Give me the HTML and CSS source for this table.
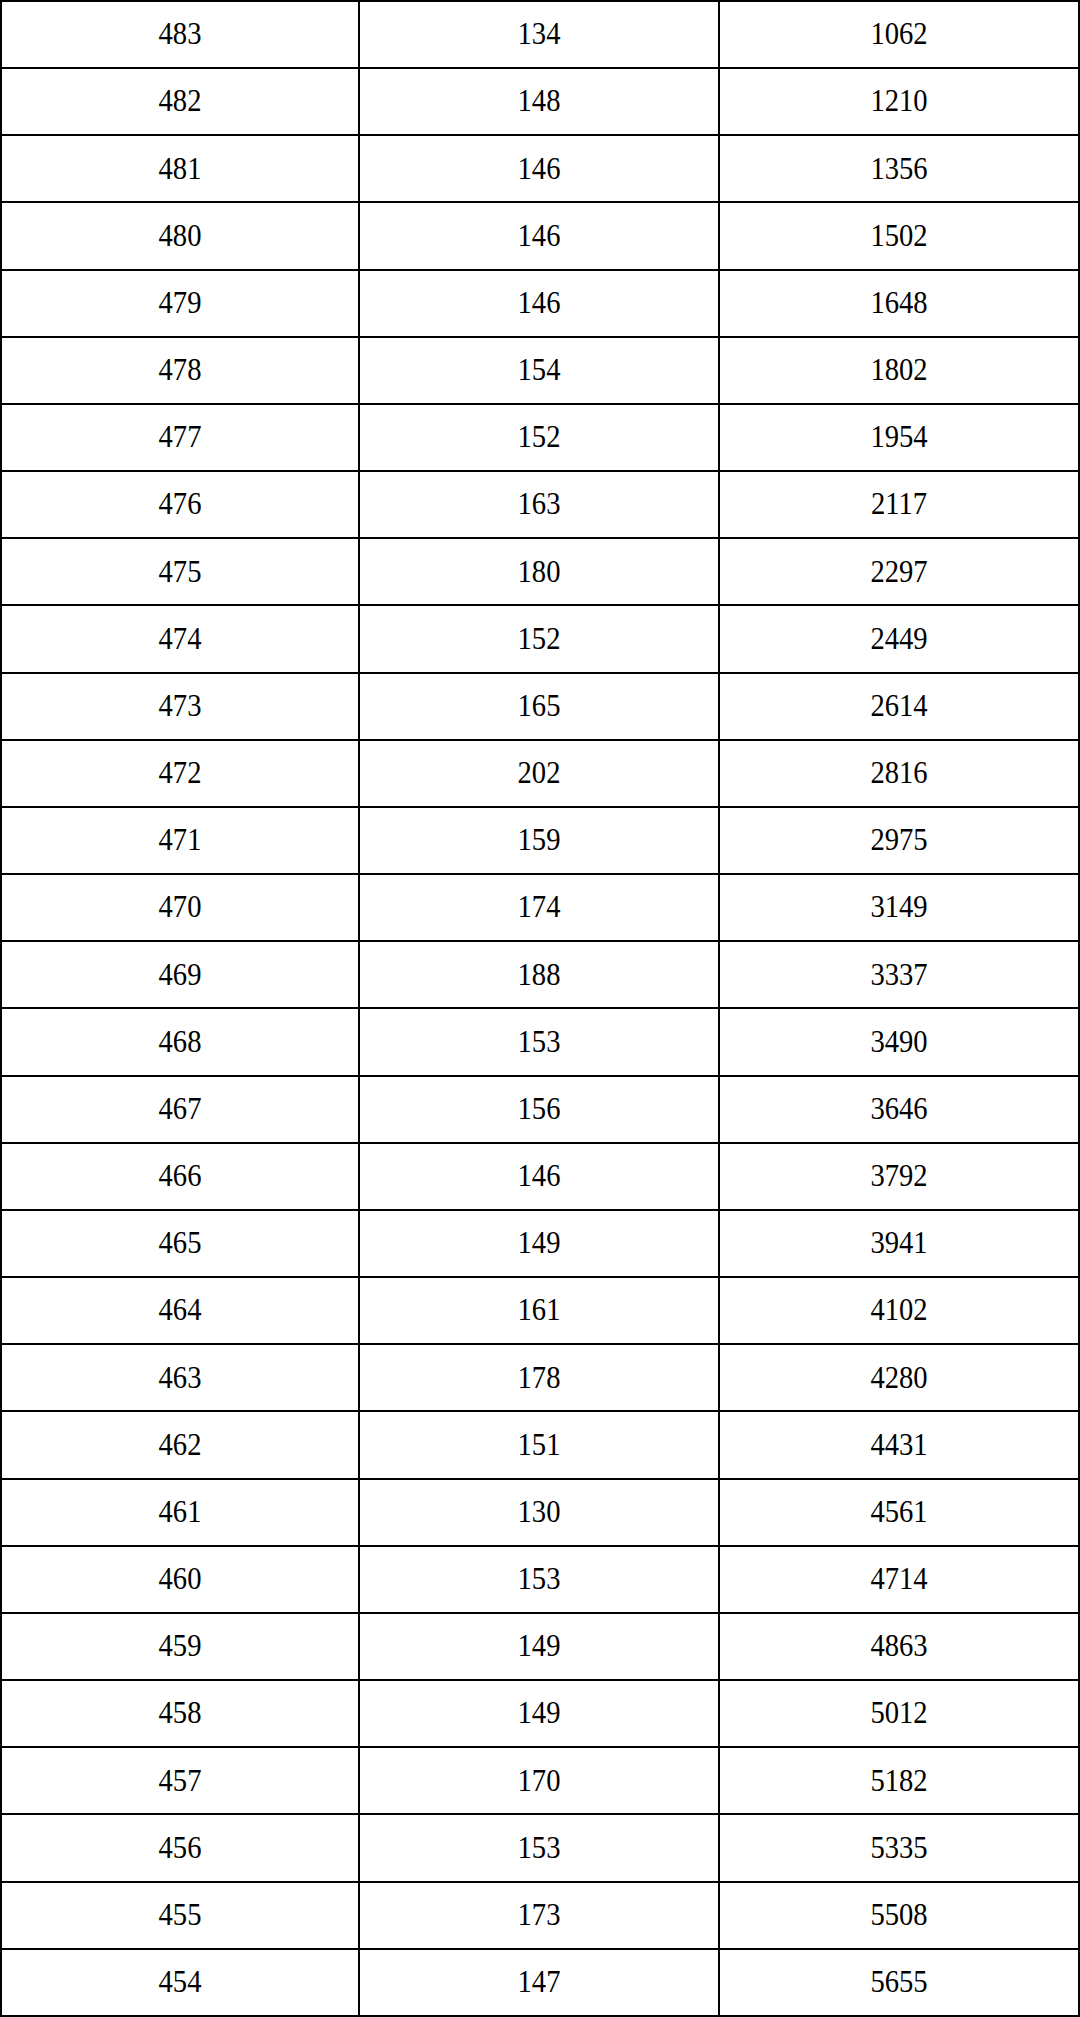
FILE: index.html
```html
<!DOCTYPE html>
<html>
<head>
<meta charset="utf-8">
<link rel="stylesheet" href="styles.css">
</head>
<body>
<div class="grid">
<div class="c"><span>483</span></div><div class="c"><span>134</span></div><div class="c"><span>1062</span></div>
<div class="c"><span>482</span></div><div class="c"><span>148</span></div><div class="c"><span>1210</span></div>
<div class="c"><span>481</span></div><div class="c"><span>146</span></div><div class="c"><span>1356</span></div>
<div class="c"><span>480</span></div><div class="c"><span>146</span></div><div class="c"><span>1502</span></div>
<div class="c"><span>479</span></div><div class="c"><span>146</span></div><div class="c"><span>1648</span></div>
<div class="c"><span>478</span></div><div class="c"><span>154</span></div><div class="c"><span>1802</span></div>
<div class="c"><span>477</span></div><div class="c"><span>152</span></div><div class="c"><span>1954</span></div>
<div class="c"><span>476</span></div><div class="c"><span>163</span></div><div class="c"><span>2117</span></div>
<div class="c"><span>475</span></div><div class="c"><span>180</span></div><div class="c"><span>2297</span></div>
<div class="c"><span>474</span></div><div class="c"><span>152</span></div><div class="c"><span>2449</span></div>
<div class="c"><span>473</span></div><div class="c"><span>165</span></div><div class="c"><span>2614</span></div>
<div class="c"><span>472</span></div><div class="c"><span>202</span></div><div class="c"><span>2816</span></div>
<div class="c"><span>471</span></div><div class="c"><span>159</span></div><div class="c"><span>2975</span></div>
<div class="c"><span>470</span></div><div class="c"><span>174</span></div><div class="c"><span>3149</span></div>
<div class="c"><span>469</span></div><div class="c"><span>188</span></div><div class="c"><span>3337</span></div>
<div class="c"><span>468</span></div><div class="c"><span>153</span></div><div class="c"><span>3490</span></div>
<div class="c"><span>467</span></div><div class="c"><span>156</span></div><div class="c"><span>3646</span></div>
<div class="c"><span>466</span></div><div class="c"><span>146</span></div><div class="c"><span>3792</span></div>
<div class="c"><span>465</span></div><div class="c"><span>149</span></div><div class="c"><span>3941</span></div>
<div class="c"><span>464</span></div><div class="c"><span>161</span></div><div class="c"><span>4102</span></div>
<div class="c"><span>463</span></div><div class="c"><span>178</span></div><div class="c"><span>4280</span></div>
<div class="c"><span>462</span></div><div class="c"><span>151</span></div><div class="c"><span>4431</span></div>
<div class="c"><span>461</span></div><div class="c"><span>130</span></div><div class="c"><span>4561</span></div>
<div class="c"><span>460</span></div><div class="c"><span>153</span></div><div class="c"><span>4714</span></div>
<div class="c"><span>459</span></div><div class="c"><span>149</span></div><div class="c"><span>4863</span></div>
<div class="c"><span>458</span></div><div class="c"><span>149</span></div><div class="c"><span>5012</span></div>
<div class="c"><span>457</span></div><div class="c"><span>170</span></div><div class="c"><span>5182</span></div>
<div class="c"><span>456</span></div><div class="c"><span>153</span></div><div class="c"><span>5335</span></div>
<div class="c"><span>455</span></div><div class="c"><span>173</span></div><div class="c"><span>5508</span></div>
<div class="c"><span>454</span></div><div class="c"><span>147</span></div><div class="c"><span>5655</span></div>
</div>
</body>
</html>
```
FILE: styles.css
```css
html, body {
  margin: 0;
  padding: 0;
  background: #fff;
}
.grid {
  box-sizing: border-box;
  width: 1080px;
  height: 2017px;
  display: grid;
  grid-template-columns: 358px 360px 360px;
  grid-template-rows: repeat(30, 1fr);
  border-top: 2px solid #000;
  border-left: 2px solid #000;
}
.c {
  box-sizing: border-box;
  border-right: 2px solid #000;
  border-bottom: 2px solid #000;
  display: flex;
  align-items: center;
  justify-content: center;
  font-family: "Liberation Serif", "Times New Roman", serif;
  font-size: 28.6px;
  color: #000;
}
.c span {
  display: inline-block;
  transform: scaleY(1.14);
  line-height: 1;
}
```
